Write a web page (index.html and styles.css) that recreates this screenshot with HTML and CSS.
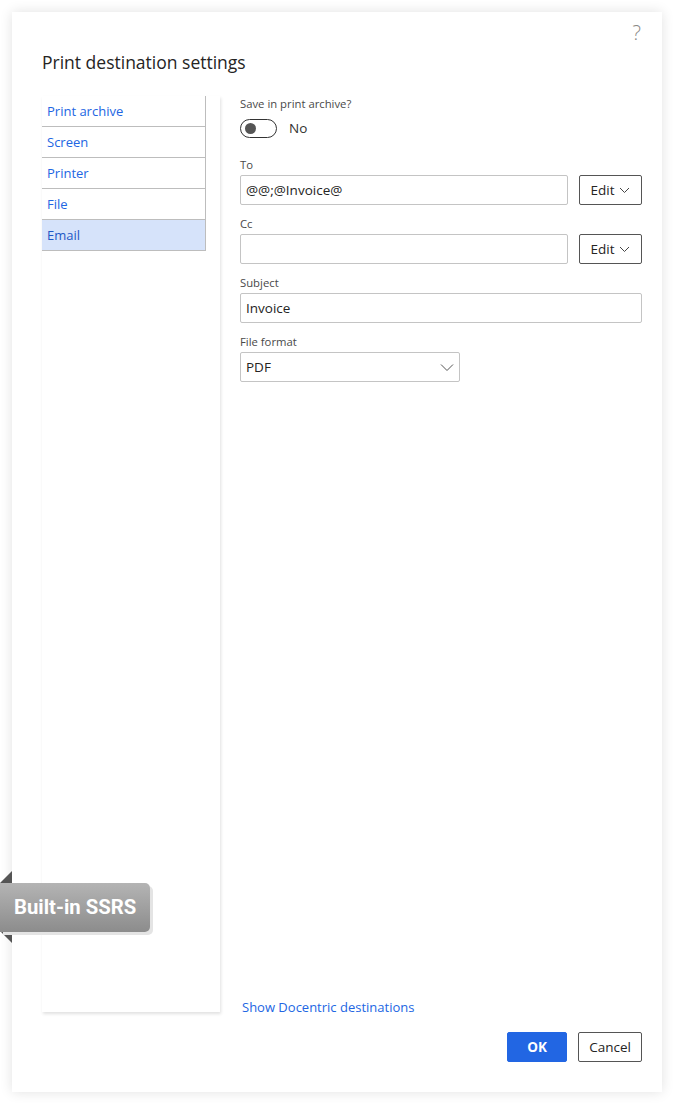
FILE: index.html
```html
<!DOCTYPE html>
<html>
<head>
<meta charset="utf-8">
<link rel="stylesheet" href="styles.css">
</head>
<body>
<div class="dialog">
  <div class="help">?</div>
  <h1 class="title">Print destination settings</h1>
  <div class="content">
    <div class="nav-card">
      <ul class="nav">
        <li>Print archive</li>
        <li>Screen</li>
        <li>Printer</li>
        <li>File</li>
        <li class="active">Email</li>
      </ul>
    </div>
    <div class="form">
      <div class="fields">
        <div class="field first">
          <label class="lbl">Save in print archive?</label>
          <div class="toggle-row">
            <span class="toggle"><span class="thumb"></span></span>
            <span class="toggle-text">No</span>
          </div>
        </div>
        <div class="field">
          <label class="lbl">To</label>
          <div class="row">
            <div class="input grow">@@;@Invoice@</div>
            <button class="edit">Edit <svg width="11" height="7" viewBox="0 0 11 7"><path d="M1 1 L5.5 5.5 L10 1" fill="none" stroke="#444" stroke-width="1"/></svg></button>
          </div>
        </div>
        <div class="field">
          <label class="lbl">Cc</label>
          <div class="row">
            <div class="input grow"></div>
            <button class="edit">Edit <svg width="11" height="7" viewBox="0 0 11 7"><path d="M1 1 L5.5 5.5 L10 1" fill="none" stroke="#444" stroke-width="1"/></svg></button>
          </div>
        </div>
        <div class="field">
          <label class="lbl">Subject</label>
          <div class="input">Invoice</div>
        </div>
        <div class="field">
          <label class="lbl">File format</label>
          <div class="input select">PDF <svg width="14" height="9" viewBox="0 0 14 9"><path d="M1 1.5 L7 7.5 L13 1.5" fill="none" stroke="#555" stroke-width="1"/></svg></div>
        </div>
      </div>
      <a class="link">Show Docentric destinations</a>
    </div>
  </div>
  <div class="footer">
    <button class="btn primary">OK</button>
    <button class="btn">Cancel</button>
  </div>
</div>
<div class="badge">
  <span class="tab-top"></span>
  <span class="tab-bottom"></span>
  <span class="badge-body">Built-in SSRS</span>
</div>
</body>
</html>
```
FILE: styles.css
```css
html, body {
  margin: 0;
  padding: 0;
  background: #ffffff;
}
body {
  padding: 12px;
  font-family: "Segoe UI", "Open Sans", "Noto Sans", sans-serif;
  color: #323130;
  width: 650px;
  height: 1080px;
}
.dialog {
  position: relative;
  background: #fff;
  width: 650px;
  height: 1080px;
  box-shadow: 0 0 12px rgba(0,0,0,0.12);
  display: flex;
  flex-direction: column;
  box-sizing: border-box;
  padding: 0 20px 30px 30px;
}
.help {
  align-self: flex-end;
  margin-top: 9px;
  margin-right: 1px;
  font-size: 20px;
  font-weight: 300;
  color: #8a8886;
  line-height: 24px;
  height: 24px;
}
.title {
  margin: 4px 0 0 0;
  font-size: 17.5px;
  font-weight: 400;
  line-height: 26px;
  color: #252423;
}
.content {
  flex: 1;
  display: flex;
  margin-top: 21px;
  min-height: 0;
}
.nav-card {
  width: 178px;
  background: #fff;
  box-shadow: 1px 2px 3px rgba(0,0,0,0.12);
  margin-bottom: 6px;
}
.nav {
  list-style: none;
  margin: 0;
  padding: 0;
  width: 163px;
  border-right: 1px solid #bdbdbd;
}
.nav li {
  height: 30px;
  line-height: 30px;
  border-bottom: 1px solid #bdbdbd;
  padding-left: 5px;
  font-size: 13px;
  color: #2266e3;
}
.nav li.active {
  background: #d6e3fa;
  color: #1e58c6;
}
.form {
  flex: 1;
  margin-left: 20px;
  display: flex;
  flex-direction: column;
  justify-content: space-between;
}
.fields {
  display: flex;
  flex-direction: column;
}
.field {
  display: flex;
  flex-direction: column;
  margin-bottom: 11px;
}
.field.first {
  margin-bottom: 14px;
}
.lbl {
  font-size: 11.3px;
  line-height: 16px;
  color: #494949;
  margin-bottom: 2px;
}
.toggle-row {
  display: flex;
  align-items: center;
  height: 30px;
  margin-top: -1px;
}
.toggle {
  box-sizing: border-box;
  width: 37px;
  height: 19px;
  border: 1px solid #333;
  border-radius: 10px;
  display: flex;
  align-items: center;
  padding-left: 4px;
}
.thumb {
  width: 11px;
  height: 11px;
  border-radius: 50%;
  background: #555;
}
.toggle-text {
  margin-left: 12px;
  font-size: 13.5px;
  color: #323130;
}
.row {
  display: flex;
  gap: 11px;
}
.input {
  box-sizing: border-box;
  height: 30px;
  border: 1px solid #c4c4c4;
  border-radius: 2px;
  padding: 0 5px;
  font-size: 13.5px;
  line-height: 28px;
  color: #252423;
}
.grow { flex: 1; }
.select {
  width: 220px;
  display: flex;
  justify-content: space-between;
  align-items: center;
  padding-right: 5px;
}
.edit {
  box-sizing: border-box;
  height: 30px;
  width: 63px;
  border: 1px solid #555;
  border-radius: 2px;
  background: #fff;
  font-family: inherit;
  font-size: 13.5px;
  color: #252423;
  display: flex;
  align-items: center;
  justify-content: center;
  gap: 5px;
  padding: 0;
}
.link {
  font-size: 13px;
  color: #2266e3;
  margin-left: 2px;
  line-height: 20px;
  margin-bottom: 1px;
}
.footer {
  display: flex;
  justify-content: flex-end;
  gap: 11px;
  margin-top: 14px;
}
.btn {
  box-sizing: border-box;
  height: 30px;
  border: 1px solid #555;
  border-radius: 2px;
  background: #fff;
  font-family: inherit;
  font-size: 13.5px;
  color: #252423;
  padding: 0;
  width: 64px;
}
.btn.primary {
  width: 60px;
  background: #2266e3;
  border-color: #2266e3;
  color: #fff;
  font-weight: 700;
}
.badge {
  position: absolute;
  left: 0;
  top: 871px;
  width: 152px;
  height: 72px;
}
.tab-top, .tab-bottom {
  position: absolute;
  left: 0;
  width: 0;
  height: 0;
}
.tab-top {
  top: 0;
  border-left: 12px solid transparent;
  border-bottom: 12px solid #555;
}
.tab-bottom {
  bottom: 0;
  border-left: 12px solid transparent;
  border-top: 12px solid #555;
}
.badge-body {
  position: absolute;
  left: 0;
  top: 12px;
  width: 150px;
  height: 49px;
  box-sizing: border-box;
  border-radius: 0 5px 5px 0;
  background: linear-gradient(#b4b4b4, #8c8c8c);
  box-shadow: 3px 3px 0 #e4e4e4;
  color: #fff;
  font-family: Roboto, "Liberation Sans", sans-serif;
  font-weight: 700;
  font-size: 20.3px;
  line-height: 49px;
  padding-left: 14px;
}
```
